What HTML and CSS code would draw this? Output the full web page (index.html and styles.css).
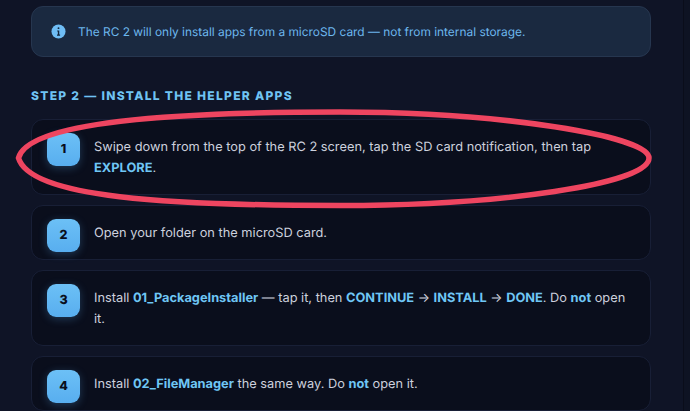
FILE: index.html
```html
<!DOCTYPE html>
<html lang="en">
<head>
<meta charset="utf-8">
<title>RC 2 install guide</title>
<link rel="stylesheet" href="styles.css">
</head>
<body>
<main class="page">
  <div class="alert">
    <svg class="alert-icon" viewBox="0 0 16 16" aria-hidden="true"><circle cx="8" cy="8" r="7.5" fill="#6fbdf5"/><rect x="7" y="3.4" width="2" height="2" rx="1" fill="#14263c"/><path d="M6.6 6.8h2.2v4.4h.9v1.2H6.4v-1.2h.9V8H6.6z" fill="#14263c"/></svg>
    <span>The RC 2 will only install apps from a microSD card — not from internal storage.</span>
  </div>
  <h2 class="section-title">STEP 2 — INSTALL THE HELPER APPS</h2>
  <ol class="steps">
    <li class="step"><span class="badge">1</span><p>Swipe down from the top of the RC 2 screen, tap the SD card notification, then tap <b>EXPLORE</b>.</p></li>
    <li class="step"><span class="badge">2</span><p>Open your folder on the microSD card.</p></li>
    <li class="step"><span class="badge">3</span><p>Install <b>01_PackageInstaller</b> — tap it, then <b>CONTINUE</b> → <b>INSTALL</b> → <b>DONE</b>. Do <b>not</b> open it.</p></li>
    <li class="step"><span class="badge">4</span><p>Install <b>02_FileManager</b> the same way. Do <b>not</b> open it.</p></li>
  </ol>
</main>
<svg class="annotation" viewBox="0 0 690 411" aria-hidden="true"><path d="M18.5 158C28 122 170 112 340 112C500 112 649 136 649 158C649 184 500 205.5 340 205.5C170 205.5 30 198 18.5 158Z" fill="none" stroke="#ee4560" stroke-width="5.5"/></svg>
</body>
</html>
```
FILE: styles.css
```css
* { box-sizing: border-box; }
html, body { margin: 0; height: 100%; }
body {
  width: 690px;
  height: 411px;
  overflow: hidden;
  position: relative;
  background: #0f1426;
  font-family: Inter, "Liberation Sans", sans-serif;
  text-rendering: geometricPrecision;
}
body::after {
  content: "";
  position: absolute;
  top: 0;
  right: 0;
  bottom: 0;
  width: 6px;
  background: #0e1323;
  border-left: 1px solid #0a0d1a;
}
.page { padding: 6px 39px 0 31px; }
.alert {
  height: 51px;
  display: flex;
  align-items: center;
  gap: 12px;
  padding: 0 19px;
  background: #1a2940;
  border: 1px solid #26364f;
  border-radius: 12px;
  color: #6db8ee;
  font-size: 11.9px;
}
.alert-icon { width: 15px; height: 15px; flex: none; }
.section-title {
  margin: 32px 0 16px;
  font-size: 12px;
  line-height: 14px;
  font-weight: 800;
  letter-spacing: 1.3px;
  color: #6fc3f3;
}
.steps { list-style: none; margin: 0; padding: 0; display: flex; flex-direction: column; gap: 10px; }
.step {
  display: flex;
  align-items: flex-start;
  gap: 14px;
  padding: 17px 15px 15px;
  background: #0a0e1c;
  border: 1px solid #181f36;
  border-radius: 12px;
}
.badge {
  width: 33px;
  height: 33px;
  flex: none;
  margin: -4px 0 -8px;
  display: flex;
  align-items: center;
  justify-content: center;
  border-radius: 9px;
  background: linear-gradient(180deg, #6cc0f6, #58aeef);
  box-shadow: 0 2px 8px rgba(88, 174, 239, .28);
  color: #0a0e1c;
  font-size: 12.5px;
  font-weight: 800;
}
.step p {
  margin: 0;
  font-size: 12.8px;
  line-height: 21px;
  color: #cdd1de;
}
.step b { font-weight: 700; color: #6fc6f5; }
.annotation { position: absolute; left: 0; top: 0; width: 690px; height: 411px; pointer-events: none; }
```
